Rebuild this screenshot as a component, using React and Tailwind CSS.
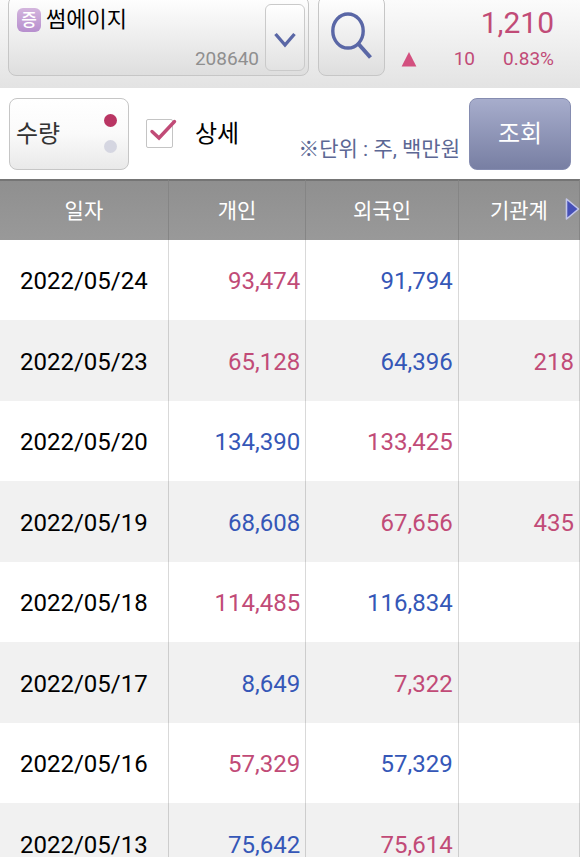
import { useState } from 'react'

const columns = ['일자', '개인', '외국인', '기관계']

const rows = [
    { date: '2022/05/24', personal: ['93,474', 'sell'], foreign: ['91,794', 'buy'] },
    { date: '2022/05/23', personal: ['65,128', 'sell'], foreign: ['64,396', 'buy'], inst: ['218', 'sell'] },
    { date: '2022/05/20', personal: ['134,390', 'buy'], foreign: ['133,425', 'sell'] },
    { date: '2022/05/19', personal: ['68,608', 'buy'], foreign: ['67,656', 'sell'], inst: ['435', 'sell'] },
    { date: '2022/05/18', personal: ['114,485', 'sell'], foreign: ['116,834', 'buy'] },
    { date: '2022/05/17', personal: ['8,649', 'buy'], foreign: ['7,322', 'sell'] },
    { date: '2022/05/16', personal: ['57,329', 'sell'], foreign: ['57,329', 'buy'] },
    { date: '2022/05/13', personal: ['75,642', 'buy'], foreign: ['75,614', 'sell'] },
]

function Amount({ value }) {
    return (
        <td className={`border-r border-black/15 pt-[2px] pr-[5px] text-right ${value && value[1] === 'buy' ? 'text-[#3557b7]' : 'text-[#c14b77]'}`}>
            {value && value[0]}
        </td>
    )
}

function StockHeader() {
    return (
        <header className="flex h-22 shrink-0 overflow-hidden bg-linear-to-b from-[#fbfbfb] to-[#e3e3e3] pl-2">
            <div className="-mt-1 flex h-20 flex-1 rounded-lg border border-[#c6c6c6] bg-linear-to-b from-white to-[#dedede] pr-[3px]">
                <div className="flex flex-1 flex-col justify-between pt-[11px] pb-1 pl-2">
                    <div className="flex items-center gap-[5px]">
                        <span className="flex size-6 items-center justify-center rounded-md bg-linear-to-b from-[#d3b5dd] to-[#b78fce] text-[17px] leading-6 font-medium text-white">증</span>
                        <span className="text-[22px] leading-6 text-black">썸에이지</span>
                    </div>
                    <span className="pr-[6px] text-right text-[19px] leading-6 text-[#8f8f8f]">208640</span>
                </div>
                <button type="button" aria-label="종목 선택" className="mt-[7px] mb-1 flex w-10 items-center justify-center rounded-md border border-[#cacaca] bg-linear-to-b from-white to-[#e2e2e2]">
                    <svg width="22" height="16" viewBox="0 0 22 16" fill="none" stroke="#5a67a6" strokeWidth="3.4" className="mt-1">
                        <path d="M1.5 2 11 13 20.5 2" />
                    </svg>
                </button>
            </div>
            <button type="button" aria-label="검색" className="-mt-1 ml-[9px] flex h-20 w-[67px] items-center justify-center rounded-lg border border-[#c6c6c6] bg-linear-to-b from-white to-[#dedede]">
                <svg width="42" height="48" viewBox="0 0 42 48" fill="none" stroke="#5a67a6" strokeWidth="3.4">
                    <ellipse cx="17" cy="19" rx="15.2" ry="17" />
                    <path d="M27.5 32 39.5 45.5" strokeWidth="4" />
                </svg>
            </button>
            <div className="flex w-[195px] flex-col pt-[7px] pr-[26px] pl-4 text-[#c14b77]">
                <span className="text-right text-[30px] leading-8">1,210</span>
                <div className="flex items-center pt-2 text-[19px] leading-6">
                    <svg width="16" height="16" viewBox="0 0 16 16" fill="#d3507f">
                        <path d="M8 1 15.4 15.5H.6z" />
                    </svg>
                    <span className="flex-1 text-right">10</span>
                    <span className="pl-7">0.83%</span>
                </div>
            </div>
        </header>
    )
}

function Toolbar() {
    const [amount, setAmount] = useState(false)
    const [detail, setDetail] = useState(true)

    return (
        <div className="flex h-[91px] shrink-0 items-center bg-white px-[9px]">
            <button
                type="button"
                aria-pressed={amount}
                onClick={() => setAmount(!amount)}
                className="flex h-18 w-[120px] items-center justify-between rounded-lg border border-[#c6c6c6] bg-linear-to-b from-white via-[#fafafa] to-[#e9e9e9] pr-[11px] pl-[6px] text-2xl text-[#333]"
            >
                {amount ? '금액' : '수량'}
                <span className="flex flex-col gap-[13px]">
                    <span className={`size-[13px] rounded-full ${amount ? 'bg-[#d5d6e1]' : 'bg-[#b93563]'}`} />
                    <span className={`size-[13px] rounded-full ${amount ? 'bg-[#b93563]' : 'bg-[#d5d6e1]'}`} />
                </span>
            </button>
            <label className="ml-[17px] flex items-center text-2xl text-black">
                <span className="relative mr-[22px] flex">
                    <input
                        type="checkbox"
                        checked={detail}
                        onChange={() => setDetail(!detail)}
                        className="h-[29px] w-[27px] appearance-none rounded-xs border border-[#c4c4c4] bg-white"
                    />
                    {detail && (
                        <svg width="28" height="24" viewBox="0 0 28 24" fill="none" stroke="#c14b77" strokeWidth="3.4" strokeLinecap="round" className="pointer-events-none absolute top-0 left-[3px]">
                            <path d="M3 12.5 10 19 25.5 2.5" />
                        </svg>
                    )}
                </span>
                상세
            </label>
            <p className="flex-1 pt-[30px] pr-[9px] text-right text-[21px] leading-7 whitespace-nowrap text-[#5c6794]">※단위 : 주, 백만원</p>
            <button type="button" className="h-18 w-[102px] rounded-lg border border-[#858cb0] bg-linear-to-b from-[#a7adcc] to-[#787fa3] text-2xl text-white">
                조회
            </button>
        </div>
    )
}

export default function App() {
    return (
        <main className="flex h-screen flex-col overflow-hidden bg-white font-['Roboto','Noto_Sans_CJK_KR',sans-serif]">
            <StockHeader />
            <Toolbar />
            <div className="relative flex-1 overflow-hidden">
                <table className="w-full table-fixed border-separate border-spacing-0">
                    <colgroup>
                        <col className="w-[29.1%]" />
                        <col className="w-[23.7%]" />
                        <col className="w-[26.3%]" />
                        <col className="w-[20.9%]" />
                    </colgroup>
                    <thead>
                        <tr className="h-[61px] bg-linear-to-b from-[#8f8f8f] to-[#999]">
                            {columns.map(c => (
                                <th key={c} scope="col" className="border-t-2 border-r border-t-[#757575] border-r-[#858585] text-[21px] leading-6 font-normal text-white">
                                    {c}
                                </th>
                            ))}
                        </tr>
                    </thead>
                    <tbody className="text-2xl">
                        {rows.map(r => (
                            <tr key={r.date} className="h-20 bg-white even:h-[81px] even:bg-[#f1f1f1]">
                                <td className="border-r border-black/15 pt-[2px] text-center text-black">{r.date}</td>
                                <Amount value={r.personal} />
                                <Amount value={r.foreign} />
                                <Amount value={r.inst} />
                            </tr>
                        ))}
                    </tbody>
                </table>
                {/* more columns to the right */}
                <button type="button" aria-label="다음" className="absolute top-[18px] right-0">
                    <svg width="15" height="24" viewBox="0 0 15 24" fill="#4650b8" stroke="#c3c6ea" strokeWidth="1.6" strokeLinejoin="round">
                        <path d="M1.5 2 13.5 12 1.5 22z" />
                    </svg>
                </button>
            </div>
        </main>
    )
}
